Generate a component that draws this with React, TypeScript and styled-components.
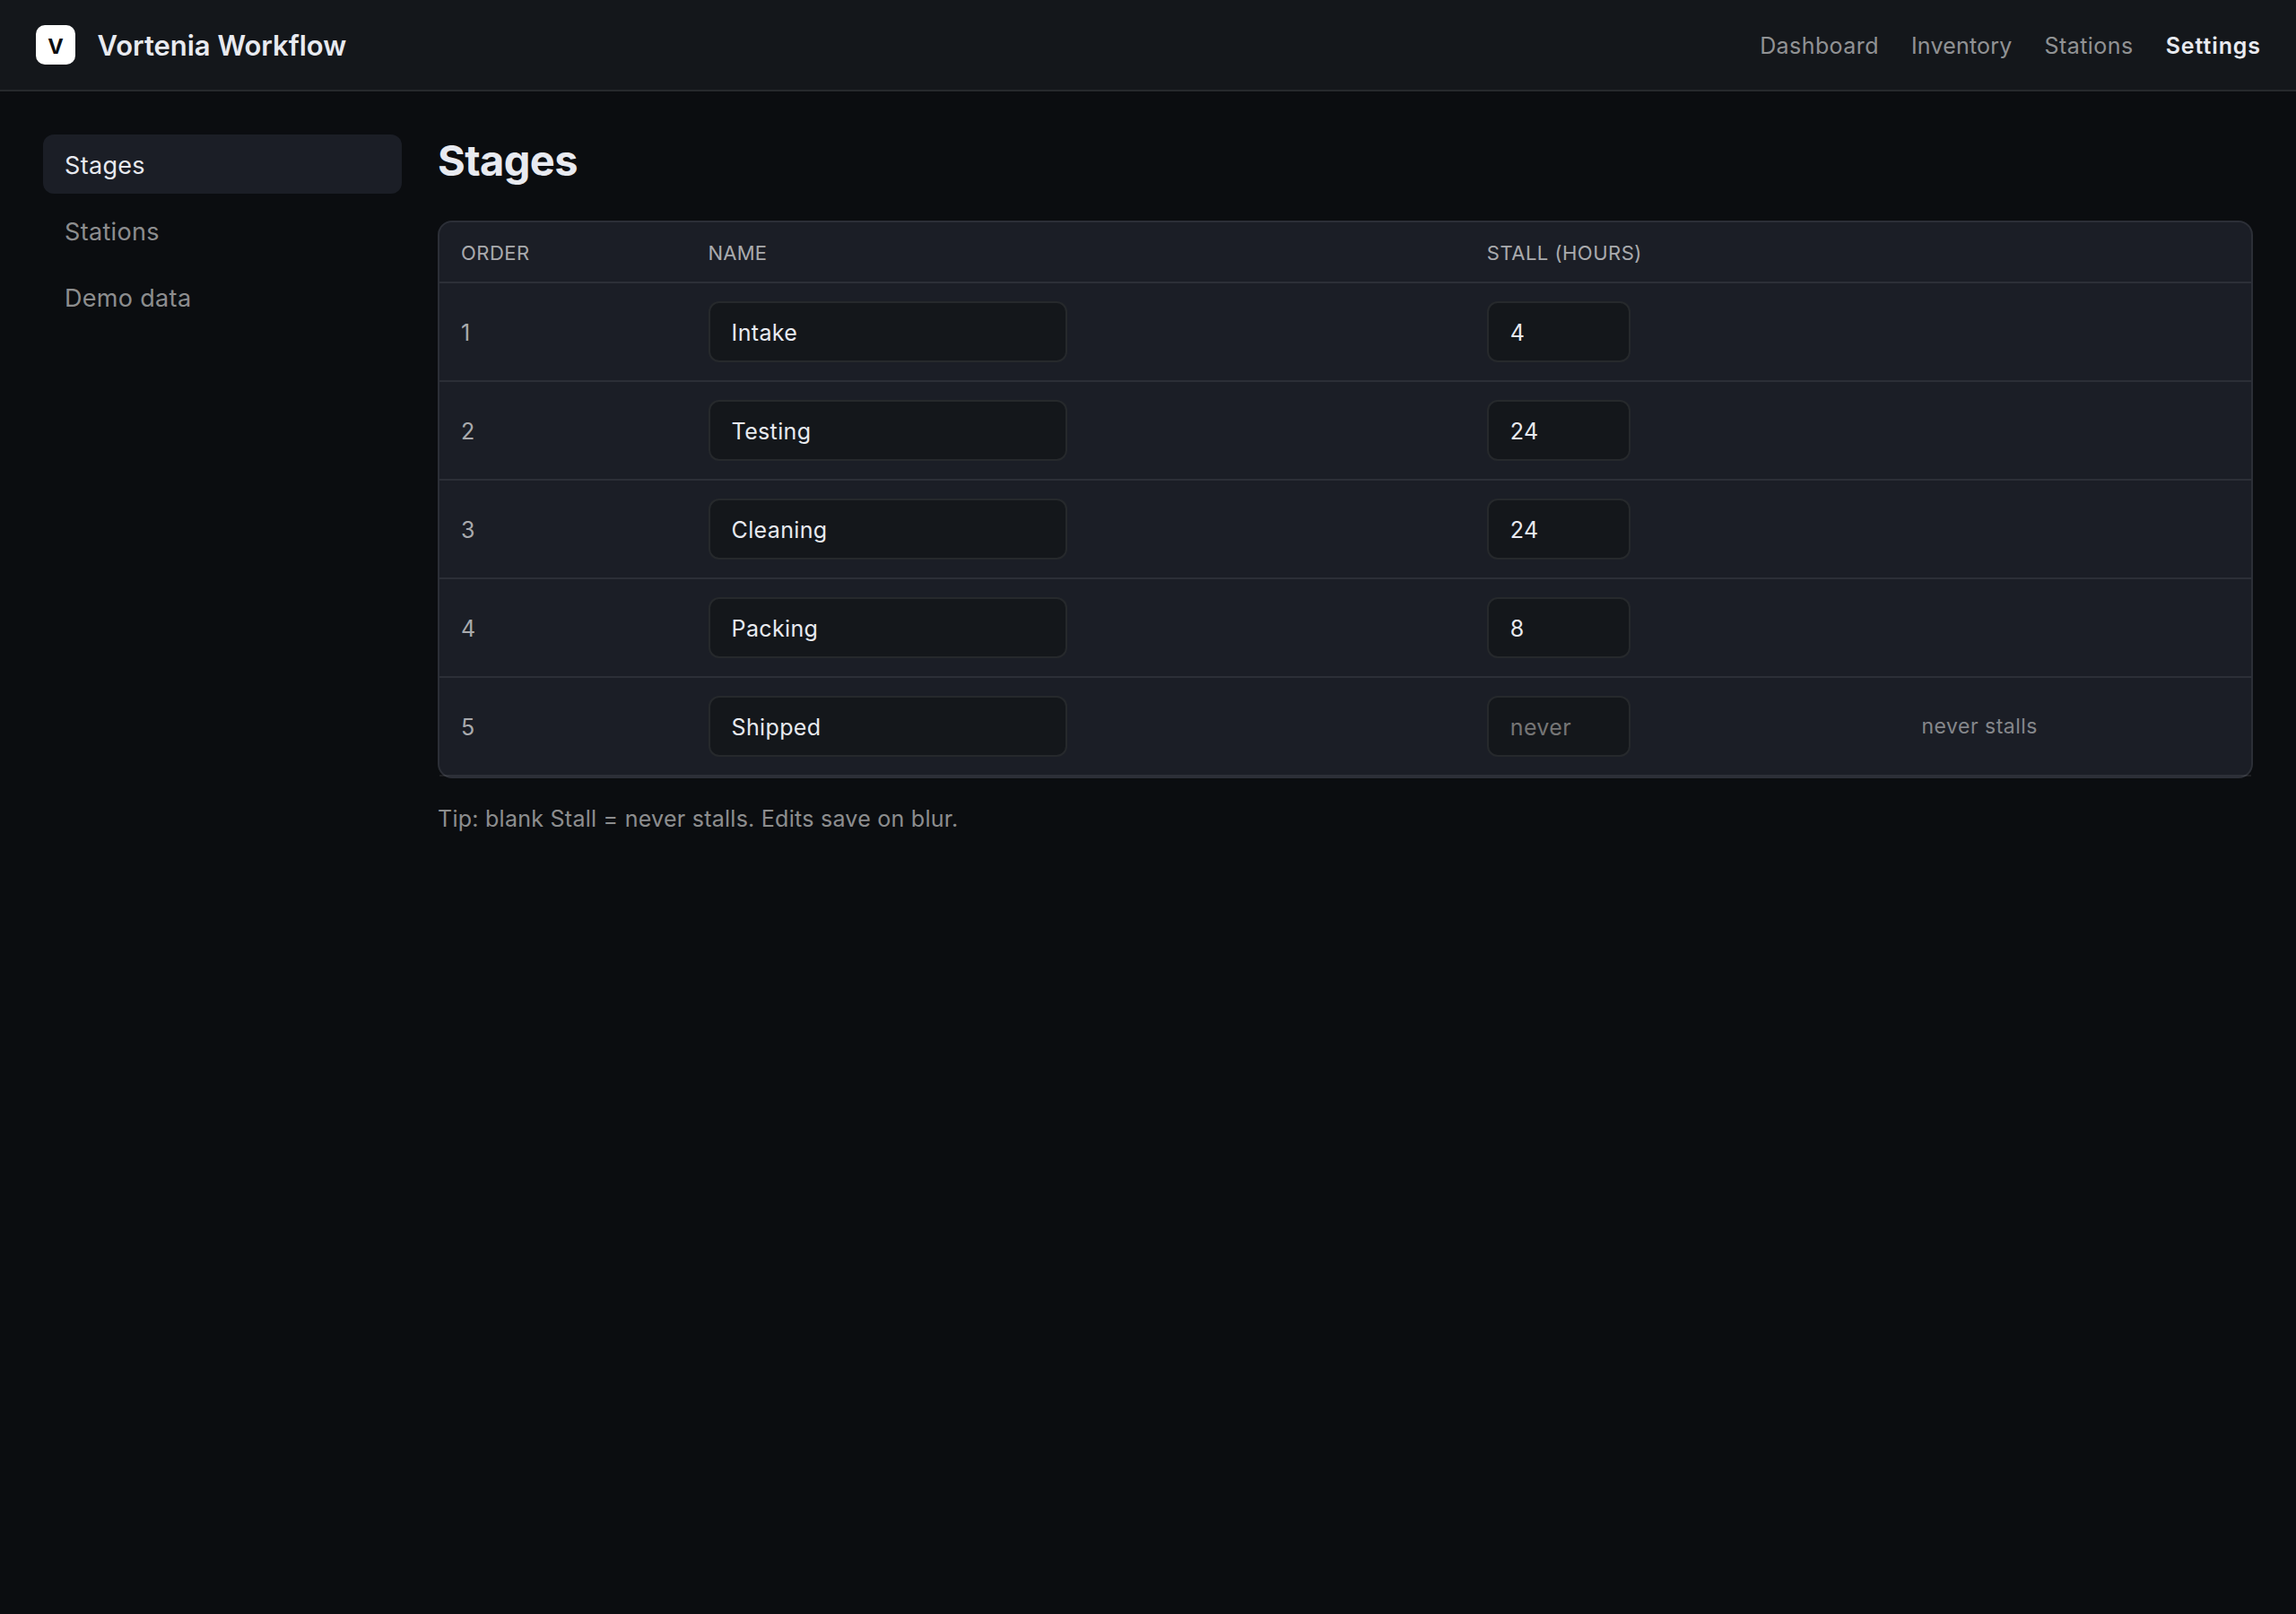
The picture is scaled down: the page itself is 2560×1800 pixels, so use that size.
import React from "react";
import styled, { createGlobalStyle } from "styled-components";

const color = {
  page: "#0b0d10",
  bar: "#14171b",
  card: "#1b1e26",
  line: "rgba(255, 255, 255, 0.08)",
  text: "#e8eaf0",
  secondary: "rgba(255, 255, 255, 0.64)",
  muted: "rgba(255, 255, 255, 0.54)",
  faint: "rgba(255, 255, 255, 0.48)",
};

const GlobalStyle = createGlobalStyle`
  *, *::before, *::after { box-sizing: border-box; }
  body {
    margin: 0;
    background: ${color.page};
    color: ${color.text};
    font-family: Inter, "Liberation Sans", sans-serif;
    font-size: 25px;
  }
`;

const Page = styled.div`
  min-height: 1800px;
`;

const TopBar = styled.header`
  display: flex;
  align-items: center;
  justify-content: space-between;
  height: 102px;
  padding: 0 39px 0 40px;
  background: ${color.bar};
  border-bottom: 2px solid ${color.line};
`;

const Brand = styled.div`
  display: flex;
  align-items: center;
  gap: 24.5px;
`;

const Logo = styled.div`
  display: flex;
  align-items: center;
  justify-content: center;
  width: 44px;
  height: 44px;
  padding-top: 4px;
  border-radius: 10px;
  background: #fff;
  color: ${color.page};
  font-size: 23.5px;
  font-weight: 700;
  line-height: 28px;
`;

const BrandName = styled.div`
  padding-top: 2px;
  font-size: 31px;
  font-weight: 600;
  line-height: 38px;
  letter-spacing: -0.03px;
`;

const Nav = styled.nav`
  display: flex;
  align-items: center;
  gap: 36px;
  padding-top: 2px;
`;

const NavLink = styled.a<{ $active?: boolean; $spacing: number }>`
  color: ${(p) => (p.$active ? color.text : color.muted)};
  font-weight: ${(p) => (p.$active ? 600 : 400)};
  line-height: 32px;
  letter-spacing: ${(p) => p.$spacing}px;
`;

const Layout = styled.div`
  display: grid;
  grid-template-columns: 400px minmax(0, 1fr);
  gap: 40px;
  padding: 48px;
`;

const Sidebar = styled.aside`
  display: flex;
  flex-direction: column;
  gap: 8px;
`;

const SideLink = styled.a<{ $active?: boolean }>`
  display: flex;
  align-items: center;
  height: 66px;
  padding: 3px 24px 0;
  border-radius: 12px;
  background: ${(p) => (p.$active ? color.card : "transparent")};
  color: ${(p) => (p.$active ? color.text : color.muted)};
  font-size: 27px;
  letter-spacing: 0.32px;
`;

const Heading = styled.h1`
  margin: 0 0 38px;
  font-size: 47px;
  font-weight: 700;
  line-height: 58px;
  letter-spacing: -0.6px;
`;

const Table = styled.table`
  width: 100%;
  table-layout: fixed;
  border: 2px solid ${color.line};
  border-collapse: separate;
  border-spacing: 0;
  border-radius: 16px;
  background: ${color.card};
`;

const Column = styled.col<{ $width?: number }>`
  width: ${(p) => (p.$width ? `${p.$width}px` : "auto")};
`;

const HeadCell = styled.th<{ $spacing?: number }>`
  height: 68px;
  padding: 2px 24px 0;
  border-bottom: 2px solid ${color.line};
  color: ${color.secondary};
  font-size: 22px;
  font-weight: 400;
  letter-spacing: ${(p) => p.$spacing ?? 0.5}px;
  line-height: 28px;
  text-align: left;
  text-transform: uppercase;
`;

const Cell = styled.td`
  height: 110px;
  padding: 20px 24px;
  border-bottom: 2px solid ${color.line};
  vertical-align: middle;
`;

const Order = styled.div`
  padding-top: 2px;
  color: ${color.secondary};
  line-height: 30px;
`;

const Field = styled.input<{ $width: number }>`
  display: block;
  width: ${(p) => p.$width}px;
  height: 68px;
  padding: 2px 24px 0;
  border: 2px solid ${color.line};
  border-radius: 12px;
  outline: none;
  background: ${color.bar};
  color: ${color.text};
  font: inherit;
  letter-spacing: 0.35px;

  &::placeholder {
    color: #757575;
    opacity: 1;
  }
`;

const Note = styled.div`
  color: ${color.faint};
  font-size: 23px;
  line-height: 28px;
  letter-spacing: 0.5px;
`;

const Tip = styled.p`
  margin: 30px 0 0;
  color: ${color.muted};
  line-height: 30px;
  letter-spacing: 0.26px;
`;

const navLinks = [
  { label: "Dashboard", spacing: 0.42 },
  { label: "Inventory", spacing: 0.2 },
  { label: "Stations", spacing: 0.45 },
  { label: "Settings", spacing: 0.9, active: true },
];

const sections = ["Stages", "Stations", "Demo data"];

const stages = [
  { name: "Intake", stall: "4" },
  { name: "Testing", stall: "24" },
  { name: "Cleaning", stall: "24" },
  { name: "Packing", stall: "8" },
  { name: "Shipped", stall: "" },
];

export default function App() {
  return (
    <Page>
      <GlobalStyle />
      <TopBar>
        <Brand>
          <Logo>V</Logo>
          <BrandName>Vortenia Workflow</BrandName>
        </Brand>
        <Nav>
          {navLinks.map((link) => (
            <NavLink key={link.label} $active={link.active} $spacing={link.spacing}>
              {link.label}
            </NavLink>
          ))}
        </Nav>
      </TopBar>
      <Layout>
        <Sidebar>
          {sections.map((section, i) => (
            <SideLink key={section} $active={i === 0}>
              {section}
            </SideLink>
          ))}
        </Sidebar>
        <main>
          <Heading>Stages</Heading>
          <Table>
            <colgroup>
              <Column $width={275.6} />
              <Column $width={868.2} />
              <Column $width={484.7} />
              <Column />
            </colgroup>
            <thead>
              <tr>
                <HeadCell>Order</HeadCell>
                <HeadCell $spacing={0.15}>Name</HeadCell>
                <HeadCell>Stall (hours)</HeadCell>
                <HeadCell />
              </tr>
            </thead>
            <tbody>
              {stages.map((stage, i) => (
                <tr key={stage.name}>
                  <Cell>
                    <Order>{i + 1}</Order>
                  </Cell>
                  <Cell>
                    <Field $width={400} defaultValue={stage.name} />
                  </Cell>
                  <Cell>
                    <Field $width={160} defaultValue={stage.stall} placeholder="never" />
                  </Cell>
                  <Cell>{stage.stall === "" && <Note>never stalls</Note>}</Cell>
                </tr>
              ))}
            </tbody>
          </Table>
          <Tip>Tip: blank Stall = never stalls. Edits save on blur.</Tip>
        </main>
      </Layout>
    </Page>
  );
}
